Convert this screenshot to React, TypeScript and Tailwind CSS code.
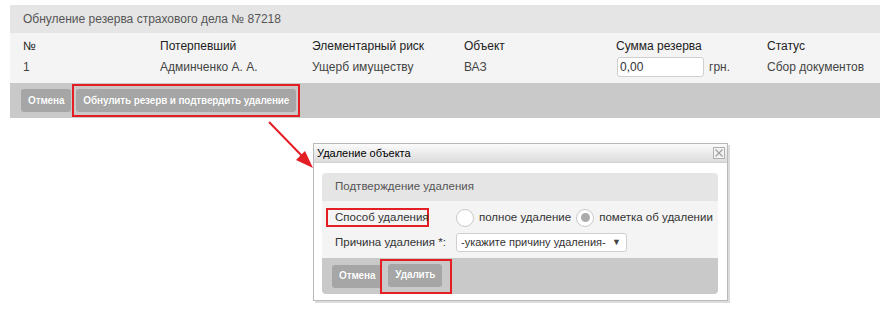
import React from "react";

const cols = ["№", "Потерпевший", "Элементарный риск", "Объект", "Сумма резерва", "Статус"];

function GrayButton({ children }: { children: React.ReactNode }) {
  return (
    <button className="h-[23px] px-[7px] rounded-[3px] bg-[#a6a6a6] text-white text-[10px] font-bold leading-none tracking-[-0.15px] whitespace-nowrap shrink-0 [text-shadow:0_0_1px_rgba(0,0,0,0.15)]">
      {children}
    </button>
  );
}

function Radio({ checked }: { checked?: boolean }) {
  return (
    <span className="w-[18px] h-[18px] rounded-full border border-[#c9c9c9] bg-white flex items-center justify-center shrink-0">
      {checked && <span className="w-[9px] h-[9px] rounded-full bg-[#ababab]" />}
    </span>
  );
}

export default function App() {
  return (
    <div className="relative w-[882px] h-[311px] bg-white overflow-hidden whitespace-nowrap font-['Liberation_Sans',Arial,sans-serif] text-[12px] text-[#333]">
      {/* reserve panel */}
      <section className="ml-[10px] mt-[5px] w-[870px]">
        <div className="h-[28px] bg-[#e5e5e5] flex items-center pl-[13px] pb-[1px] text-[#555]">
          Обнуление резерва страхового дела № 87218
        </div>
        <div className="bg-[#f4f4f4] pt-[3px] pb-[6px] pl-[13px]">
          <div className="grid grid-cols-[137px_152px_152px_152px_151px_1fr] h-[20px] items-center text-[#222]">
            {cols.map((c) => (
              <div key={c}>{c}</div>
            ))}
          </div>
          <div className="grid grid-cols-[137px_152px_152px_152px_151px_1fr] h-[21px] items-center text-[#444]">
            <div>1</div>
            <div>Админченко А. А.</div>
            <div>Ущерб имуществу</div>
            <div>ВАЗ</div>
            <div className="flex items-center">
              <input
                readOnly
                value="0,00"
                className="w-[87px] h-[20px] ml-[1px] pl-[2px] border border-[#cfcfcf] rounded-[3px] bg-white text-[12px] text-[#333] outline-none"
              />
              <span className="ml-[5px]">грн.</span>
            </div>
            <div>Сбор документов</div>
          </div>
        </div>
        <div className="h-[35px] bg-[#c9c9c9] flex items-center pl-[11px]">
          <GrayButton>Отмена</GrayButton>
          <div className="flex ml-[1px] border-2 border-[#e31e24] px-[2px] py-[3px]">
            <GrayButton>Обнулить резерв и подтвердить удаление</GrayButton>
          </div>
        </div>
      </section>

      {/* dialog window */}
      <div className="ml-[313px] mt-[25px] w-[415px] h-[158px] border border-[#b9b9b9] bg-white shadow-[2px_2px_0_#dcdcdc] flex flex-col">
        <div className="h-[19px] bg-gradient-to-b from-[#fbfbfb] to-[#dcdcdc] border-b border-[#d0d0d0] flex items-start justify-between pl-[3px] pr-[2px] pt-[3px]">
          <span className="text-[11px] leading-[13px] text-black">Удаление объекта</span>
          <span className="w-[12px] h-[12px] border border-[#b0b0b0] bg-[#f2f2f2] flex items-center justify-center">
            <svg width="10" height="10" viewBox="0 0 10 10">
              <path d="M1.5 1.5 L8.5 8.5 M8.5 1.5 L1.5 8.5" stroke="#a0a0a0" strokeWidth="1.2" />
            </svg>
          </span>
        </div>
        <div className="ml-[8px] mt-[10px] w-[396px] rounded-[4px] overflow-hidden text-[11.5px]">
          <div className="h-[28px] bg-[#e5e5e5] flex items-center pl-[13px] text-[#555]">
            Подтверждение удаления
          </div>
          <div className="bg-[#f4f4f4] pt-[7px] pb-[6px]">
            <div className="flex items-center h-[19px] pl-[4px]">
              <div className="w-[130px] shrink-0">
                <span className="block w-[103px] h-[19px] border-2 border-[#e31e24] pl-[7px] leading-[15px]">
                  Способ удаления
                </span>
              </div>
              <Radio />
              <span className="ml-[5px] shrink-0">полное удаление</span>
              <span className="ml-[5px] shrink-0">
                <Radio checked />
              </span>
              <span className="ml-[5px] shrink-0">пометка об удалении</span>
            </div>
            <div className="flex items-center h-[19px] mt-[6px] pl-[13px]">
              <div className="w-[121px] shrink-0">Причина удаления *:</div>
              <div className="w-[171px] h-[19px] shrink-0 border border-[#cfcfcf] rounded-[3px] bg-white flex items-center justify-between pl-[4px] pr-[5px] text-[11px]">
                <span>-укажите причину удаления-</span>
                <span className="text-[9px] text-[#444]">▼</span>
              </div>
            </div>
          </div>
          <div className="h-[36px] bg-[#c9c9c9] flex items-center pl-[10px]">
            <GrayButton>Отмена</GrayButton>
            <div className="flex -ml-[2px] border-2 border-[#e31e24] pl-[6px] pr-[8px] pt-[3px] pb-[5px]">
              <GrayButton>Удалить</GrayButton>
            </div>
          </div>
        </div>
      </div>

      {/* pointer arrow */}
      <svg className="absolute left-0 top-0 pointer-events-none" width="882" height="311">
        <line x1="269" y1="122" x2="304" y2="158" stroke="#e31e24" strokeWidth="2" />
        <polygon points="313,168 296,160 305,151" fill="#e31e24" />
      </svg>
    </div>
  );
}
